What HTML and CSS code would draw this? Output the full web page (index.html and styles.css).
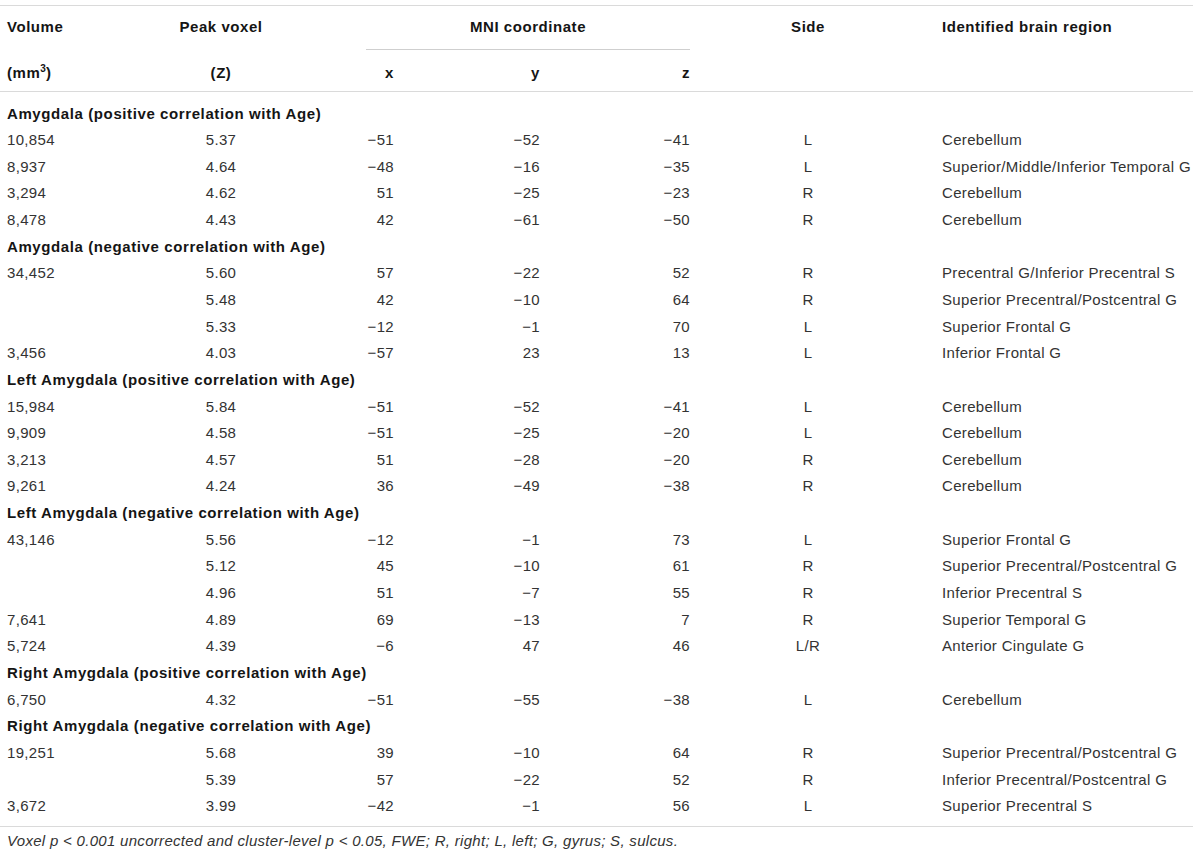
FILE: index.html
```html
<!DOCTYPE html>
<html lang="en">
<head>
<meta charset="utf-8">
<title>Table</title>
<link rel="stylesheet" href="styles.css">
</head>
<body>
<div class="wrap">
<table class="tbl">
  <colgroup>
    <col class="c-vol"><col class="c-peak"><col class="c-x"><col class="c-y"><col class="c-z"><col class="c-side"><col class="c-reg">
  </colgroup>
  <thead>
    <tr class="h1">
      <th class="l">Volume</th>
      <th class="c">Peak voxel</th>
      <th class="mni" colspan="3"><div class="mni-in">MNI coordinate</div></th>
      <th class="c">Side</th>
      <th class="reg">Identified brain region</th>
    </tr>
    <tr class="h2">
      <th class="l">(mm<sup>3</sup>)</th>
      <th class="c">(Z)</th>
      <th class="r">x</th>
      <th class="r">y</th>
      <th class="r">z</th>
      <th></th>
      <th></th>
    </tr>
  </thead>
  <tbody>
    <tr class="sec first"><td colspan="7">Amygdala (positive correlation with Age)</td></tr>
    <tr><td class="l">10,854</td><td class="c">5.37</td><td class="r">−51</td><td class="r">−52</td><td class="r">−41</td><td class="c">L</td><td class="reg">Cerebellum</td></tr>
    <tr><td class="l">8,937</td><td class="c">4.64</td><td class="r">−48</td><td class="r">−16</td><td class="r">−35</td><td class="c">L</td><td class="reg">Superior/Middle/Inferior Temporal G</td></tr>
    <tr><td class="l">3,294</td><td class="c">4.62</td><td class="r">51</td><td class="r">−25</td><td class="r">−23</td><td class="c">R</td><td class="reg">Cerebellum</td></tr>
    <tr><td class="l">8,478</td><td class="c">4.43</td><td class="r">42</td><td class="r">−61</td><td class="r">−50</td><td class="c">R</td><td class="reg">Cerebellum</td></tr>

    <tr class="sec"><td colspan="7">Amygdala (negative correlation with Age)</td></tr>
    <tr><td class="l">34,452</td><td class="c">5.60</td><td class="r">57</td><td class="r">−22</td><td class="r">52</td><td class="c">R</td><td class="reg">Precentral G/Inferior Precentral S</td></tr>
    <tr><td class="l"></td><td class="c">5.48</td><td class="r">42</td><td class="r">−10</td><td class="r">64</td><td class="c">R</td><td class="reg">Superior Precentral/Postcentral G</td></tr>
    <tr><td class="l"></td><td class="c">5.33</td><td class="r">−12</td><td class="r">−1</td><td class="r">70</td><td class="c">L</td><td class="reg">Superior Frontal G</td></tr>
    <tr><td class="l">3,456</td><td class="c">4.03</td><td class="r">−57</td><td class="r">23</td><td class="r">13</td><td class="c">L</td><td class="reg">Inferior Frontal G</td></tr>

    <tr class="sec"><td colspan="7">Left Amygdala (positive correlation with Age)</td></tr>
    <tr><td class="l">15,984</td><td class="c">5.84</td><td class="r">−51</td><td class="r">−52</td><td class="r">−41</td><td class="c">L</td><td class="reg">Cerebellum</td></tr>
    <tr><td class="l">9,909</td><td class="c">4.58</td><td class="r">−51</td><td class="r">−25</td><td class="r">−20</td><td class="c">L</td><td class="reg">Cerebellum</td></tr>
    <tr><td class="l">3,213</td><td class="c">4.57</td><td class="r">51</td><td class="r">−28</td><td class="r">−20</td><td class="c">R</td><td class="reg">Cerebellum</td></tr>
    <tr><td class="l">9,261</td><td class="c">4.24</td><td class="r">36</td><td class="r">−49</td><td class="r">−38</td><td class="c">R</td><td class="reg">Cerebellum</td></tr>

    <tr class="sec"><td colspan="7">Left Amygdala (negative correlation with Age)</td></tr>
    <tr><td class="l">43,146</td><td class="c">5.56</td><td class="r">−12</td><td class="r">−1</td><td class="r">73</td><td class="c">L</td><td class="reg">Superior Frontal G</td></tr>
    <tr><td class="l"></td><td class="c">5.12</td><td class="r">45</td><td class="r">−10</td><td class="r">61</td><td class="c">R</td><td class="reg">Superior Precentral/Postcentral G</td></tr>
    <tr><td class="l"></td><td class="c">4.96</td><td class="r">51</td><td class="r">−7</td><td class="r">55</td><td class="c">R</td><td class="reg">Inferior Precentral S</td></tr>
    <tr><td class="l">7,641</td><td class="c">4.89</td><td class="r">69</td><td class="r">−13</td><td class="r">7</td><td class="c">R</td><td class="reg">Superior Temporal G</td></tr>
    <tr><td class="l">5,724</td><td class="c">4.39</td><td class="r">−6</td><td class="r">47</td><td class="r">46</td><td class="c">L/R</td><td class="reg">Anterior Cingulate G</td></tr>

    <tr class="sec"><td colspan="7">Right Amygdala (positive correlation with Age)</td></tr>
    <tr><td class="l">6,750</td><td class="c">4.32</td><td class="r">−51</td><td class="r">−55</td><td class="r">−38</td><td class="c">L</td><td class="reg">Cerebellum</td></tr>

    <tr class="sec"><td colspan="7">Right Amygdala (negative correlation with Age)</td></tr>
    <tr><td class="l">19,251</td><td class="c">5.68</td><td class="r">39</td><td class="r">−10</td><td class="r">64</td><td class="c">R</td><td class="reg">Superior Precentral/Postcentral G</td></tr>
    <tr><td class="l"></td><td class="c">5.39</td><td class="r">57</td><td class="r">−22</td><td class="r">52</td><td class="c">R</td><td class="reg">Inferior Precentral/Postcentral G</td></tr>
    <tr class="last"><td class="l">3,672</td><td class="c">3.99</td><td class="r">−42</td><td class="r">−1</td><td class="r">56</td><td class="c">L</td><td class="reg">Superior Precentral S</td></tr>
  </tbody>
</table>
<p class="note">Voxel p &lt; 0.001 uncorrected and cluster-level p &lt; 0.05, FWE; R, right; L, left; G, gyrus; S, sulcus.</p>
</div>
</body>
</html>
```

FILE: styles.css
```css
html, body {
  margin: 0;
  padding: 0;
  background: #ffffff;
}

.wrap {
  padding-top: 5px;
  width: 1193px;
  font-family: "Liberation Sans", Arial, Helvetica, sans-serif;
  font-size: 15px;
  color: #333333;
}

.tbl {
  width: 1193px;
  table-layout: fixed;
  border-collapse: collapse;
  border-top: 1px solid #dadada;
  border-bottom: 1px solid #dadada;
}

.c-vol { width: 150px; }
.c-peak { width: 142px; }
.c-x { width: 109px; }
.c-y { width: 146px; }
.c-z { width: 150px; }
.c-side { width: 222px; }
.c-reg { width: 274px; }

th, td {
  padding: 0 7px;
  line-height: 17px;
  white-space: nowrap;
  overflow: visible;
}

th {
  font-weight: bold;
  color: #151515;
  letter-spacing: 0.55px;
  vertical-align: top;
}

.l { text-align: left; }
.c { text-align: center; }
.r { text-align: right; }
.reg { text-align: left; padding-left: 23px; }

.h1 th {
  padding-top: 12px;
  padding-bottom: 15px;
}

.h1 th.mni {
  padding: 12px 0 0 0;
  text-align: center;
}

.mni-in {
  margin: 0 7px 0 74px;
  padding-bottom: 14px;
  border-bottom: 1px solid #cfcfcf;
}

.h2 th {
  padding-top: 14px;
  padding-bottom: 10px;
}

thead {
  border-bottom: 1px solid #dadada;
}

sup {
  font-size: 10px;
  line-height: 0;
  vertical-align: 6px;
  letter-spacing: 0;
}

td {
  padding-top: 5px;
  padding-bottom: 4.65px;
  letter-spacing: 0.33px;
  vertical-align: top;
}

.sec td {
  font-weight: bold;
  color: #151515;
  letter-spacing: 0.6px;
}

.first td {
  padding-top: 12.5px;
}

.last td {
  padding-bottom: 11.5px;
}

.note {
  margin: 5px 0 0 0;
  padding-left: 7px;
  font-style: italic;
  line-height: 17px;
  letter-spacing: 0.3px;
  color: #333333;
}
```
